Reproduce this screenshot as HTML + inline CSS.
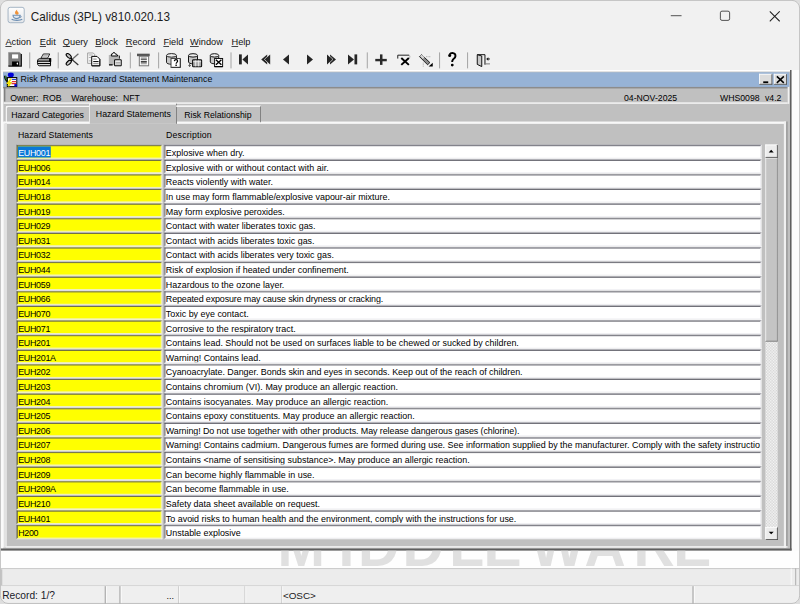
<!DOCTYPE html><html><head><meta charset="utf-8"><style>html,body{margin:0;padding:0;width:800px;height:604px;overflow:hidden;background:#dedede}#S{position:absolute;left:0;top:0;width:1040px;height:786px;transform:scale(0.7692308);transform-origin:0 0;overflow:hidden}
*{margin:0;padding:0;box-sizing:border-box}
#S{font-family:"Liberation Sans",sans-serif}
#S div,#S span,#S svg{position:absolute}
.t{white-space:nowrap;color:#000}
.menu{font-size:12.025px;top:47.19px;line-height:14.3px;color:#111}
.menu u{text-decoration:underline;text-underline-offset:1.95px;text-decoration-thickness:1.3px}
.sep{width:1.3px;height:20.8px;top:67.6px;background:#a0a0a0}
.g{background:#c0c0c0}
.ft{font-size:11.609px;line-height:15.6px;white-space:nowrap;color:#000}
.fld{height:18.98px;overflow:hidden}
</style></head><body><div id="S"><div id="W" style="left:0px;top:0px;width:1040px;height:785.2px;border-radius:10.4px;overflow:hidden;background:#f1f1f1">
<div style="left:10.4px;top:9.49px;width:21.45px;height:20.8px;border:1.69px solid #8ea3b9;border-radius:3.25px;background:linear-gradient(#fdfdfd,#e4e7ea)"></div>
<svg style="left:11.7px;top:10.4px;width:19.5px;height:19.5px" viewBox="0 0 15 15"><path d="M7.9 1.8c-1.9 1.5-2.7 3-1.7 4.6.5.8 1.7 1 2.5.4 1-.8.9-2-.1-2.8-.7-.6-.9-1.3-.7-2.2z" fill="#ef9238"/><path d="M3.8 7.6h7c0 1.9-1.4 3.3-3.5 3.3s-3.5-1.4-3.5-3.3z" fill="#dfe6ee" stroke="#6d8fb3" stroke-width="1.1"/><path d="M10.9 8.1c1.3 0 1.5 1.5 0 2" stroke="#6d8fb3" fill="none" stroke-width="0.9"/><path d="M2.4 11.6c2 1.4 8.6 1.4 10.6 0" stroke="#6d8fb3" stroke-width="1.2" fill="none"/></svg>
<div class="t" style="left:40.3px;top:12.48px;font-size:16.38px;line-height:18.2px;color:#1c1c1c;transform:scaleX(0.934);transform-origin:0 0">Calidus (3PL) v810.020.13</div>
<div style="left:872.3px;top:19.5px;width:13.65px;height:1.3px;background:#222"></div>
<div style="left:936px;top:14.3px;width:13px;height:13px;border:1.3px solid #222;border-radius:2.6px"></div>
<svg style="left:999.7px;top:14.3px;width:14.3px;height:14.3px" viewBox="0 0 11 11"><path d="M0.5 0.5L10.5 10.5M10.5 0.5L0.5 10.5" stroke="#222" stroke-width="1.1"/></svg>
<div class="t menu" style="left:7.02px"><u>A</u>ction</div>
<div class="t menu" style="left:51.74px"><u>E</u>dit</div>
<div class="t menu" style="left:81.64px"><u>Q</u>uery</div>
<div class="t menu" style="left:123.89px"><u>B</u>lock</div>
<div class="t menu" style="left:163.41px"><u>R</u>ecord</div>
<div class="t menu" style="left:212.42px"><u>F</u>ield</div>
<div class="t menu" style="left:247px"><u>W</u>indow</div>
<div class="t menu" style="left:300.95px"><u>H</u>elp</div>
<svg style="left:0px;top:58.5px;width:650px;height:35.1px" viewBox="0 45 500 27"><rect x="29.2" y="52" width="1" height="16" fill="#a4a4a4"/><rect x="57.7" y="52" width="1" height="16" fill="#a4a4a4"/><rect x="129.8" y="52" width="1" height="16" fill="#a4a4a4"/><rect x="158.1" y="52" width="1" height="16" fill="#a4a4a4"/><rect x="230.5" y="52" width="1" height="16" fill="#a4a4a4"/><rect x="366.8" y="52" width="1" height="16" fill="#a4a4a4"/><rect x="439.1" y="52" width="1" height="16" fill="#a4a4a4"/><rect x="467.1" y="52" width="1" height="16" fill="#a4a4a4"/><g transform="translate(5 49)"><path d="M3.3 3.1h11.5l2.1 2.1v11.5h-13.6z" fill="#7c7c7c"/><path d="M16.3 4.6v12.1h-13" stroke="#111" stroke-width="1.1" fill="none"/><path d="M3.3 3.1h11.5" stroke="#999" stroke-width="0.8"/><rect x="7" y="5" width="6.1" height="4.1" fill="#fff"/><rect x="7" y="12.1" width="6.9" height="4.6" fill="#000"/><ellipse cx="12.3" cy="14.2" rx="0.7" ry="1.1" fill="#fff"/></g><g transform="translate(34 49)"><path d="M9.3 4.6h6.4l-2.2 4.2h-6.6z" fill="#f2f2f2" stroke="#111" stroke-width="0.9"/><path d="M8.6 6.3h5.2M7.9 7.6h5.2" stroke="#9a9a9a" stroke-width="0.8"/><path d="M5.2 9.4h11.3v7h-11.3c-1.2 0-1.8-1.5-1.8-3.5s.6-3.5 1.8-3.5z" fill="#d8d8d8" stroke="#000" stroke-width="1"/><path d="M3.6 11.7h12.9M3.6 14.1h12.9" stroke="#000" stroke-width="1.1"/><rect x="15" y="8.8" width="2.2" height="3.6" fill="#000"/></g><g transform="translate(62 49)"><ellipse cx="6.7" cy="6.5" rx="3.1" ry="1.6" transform="rotate(42 6.7 6.5)" fill="#c4c4c4" stroke="#000" stroke-width="1.1"/><ellipse cx="6.7" cy="13.3" rx="3.1" ry="1.6" transform="rotate(-42 6.7 13.3)" fill="#c4c4c4" stroke="#000" stroke-width="1.1"/><path d="M8.8 8.6l1.6 1.4-1.6 1.6" stroke="#000" stroke-width="1.5" fill="none"/><path d="M10.2 9.9L16.4 4.3" stroke="#6a6a6a" stroke-width="1.2"/><path d="M10.2 10.4L16.3 15.6" stroke="#333" stroke-width="1.2"/></g><g transform="translate(84 49)"><path d="M3.6 3.6h5.6l1.4 1.4v9h-7z" fill="#f6f6f6" stroke="#9a9a9a" stroke-width="0.9"/><path d="M4.8 5.6h3.8M4.8 8.1h2.6M4.8 11.5h2.6" stroke="#a8a8a8" stroke-width="0.9"/><path d="M7.7 7h5.3l2.8 2.8v6.6h-8.1z" fill="#fff" stroke="#000" stroke-width="1"/><path d="M15.9 9.8v6.8h-8" stroke="#000" stroke-width="0.6" fill="none"/><path d="M9.2 9.7h3.4M9.2 14.3h5.4" stroke="#777" stroke-width="0.9"/><path d="M9.2 12.2h5.4" stroke="#000" stroke-width="1"/></g><g transform="translate(105 49)"><rect x="3.8" y="5.6" width="10.5" height="10" fill="#b6b6b6"/><path d="M4 15.4h3.6" stroke="#000" stroke-width="1.3"/><path d="M6.3 6.6h6.4l-1.2-1.9h-1.1l-1-1.6h-1l-1 1.6h-1z" fill="#fff" stroke="#000" stroke-width="1"/><path d="M14.4 6.3v3" stroke="#222" stroke-width="1"/><path d="M9.6 10.4h6.6v6h-6.6z" fill="#fff" stroke="#000" stroke-width="1"/><path d="M10.6 12.9h4.8M10.6 14.6h4.8" stroke="#8a8a8a" stroke-width="0.9"/></g><g transform="translate(133 49)"><rect x="4" y="4.3" width="12.7" height="2.5" fill="#555"/><rect x="6.3" y="6.9" width="9.3" height="9.5" fill="#fff" stroke="#777" stroke-width="1"/><rect x="7.8" y="8" width="6" height="2.1" fill="#a0a0a0"/><path d="M7.8 10.3h6" stroke="#333" stroke-width="0.8"/><path d="M7.8 12.5h6" stroke="#000" stroke-width="1.1"/><path d="M7.8 14.3h6" stroke="#8a8a8a" stroke-width="1.1"/></g><g transform="translate(163 49)"><path d="M3.5 6.3v6.6c0 1.2 2.2 2 5 2s5-.8 5-2v-6.6" fill="#c8c8c8" stroke="#222" stroke-width="1"/><ellipse cx="8.5" cy="6" rx="5" ry="1.8" fill="#eee" stroke="#222" stroke-width="1"/><rect x="8" y="9.1" width="9.3" height="8.9" fill="#fff" stroke="#444" stroke-width="1"/><path d="M17.3 9.6v8.4h-8.8" stroke="#222" stroke-width="0.7" fill="none"/><path d="M11.3 11.8c.2-1 1-1.5 1.7-1.5.9 0 1.6.6 1.6 1.4 0 1.1-1.5 1.4-1.5 2.6" stroke="#000" stroke-width="1.2" fill="none"/><rect x="12.4" y="15.2" width="1.4" height="1.4" fill="#000"/></g><g transform="translate(185 49)"><path d="M3.5 6.3v6.3c0 1 2 1.8 4.5 1.8s4.5-.8 4.5-1.8v-6.3" fill="#c8c8c8" stroke="#111" stroke-width="1"/><ellipse cx="8" cy="6" rx="4.5" ry="1.7" fill="#eee" stroke="#111" stroke-width="1"/><path d="M4.6 14.3v2.8M3.5 15.7l1.1 1.4 1.1-1.4" stroke="#333" stroke-width="0.8" fill="none"/><rect x="7.6" y="10.4" width="9" height="7" rx="0.8" fill="#a8a8a8" stroke="#111" stroke-width="1.1"/><path d="M10.6 11v6M13.6 11v6M8.1 12.3h8" stroke="#f4f4f4" stroke-width="0.8"/></g><g transform="translate(206 49)"><path d="M4.3 6.3v6.3c0 1 1.9 1.8 4.2 1.8s4.2-.8 4.2-1.8v-6.3" fill="#c8c8c8" stroke="#111" stroke-width="1"/><ellipse cx="8.5" cy="6" rx="4.2" ry="1.7" fill="#eee" stroke="#111" stroke-width="1"/><rect x="8.6" y="9.1" width="8" height="8.1" fill="#fff" stroke="#111" stroke-width="1"/><path d="M8.6 17.2h8" stroke="#000" stroke-width="1.2"/><path d="M9.9 10.4l5.5 5M15.4 10.4l-5.5 5" stroke="#000" stroke-width="1.4"/></g><g fill="#262626"><rect x="239" y="54" width="2.8" height="10"/><path d="M248 54v10l-5.6-5z"/><path d="M267.2 54v10l-6-5z"/><path d="M270.2 54v10l-5.6-5z"/><path d="M289 54v10l-6-5z"/><path d="M307 54v10l6-5z"/><path d="M327 54v10l5.6-5z"/><path d="M330 54v10l6-5z"/><path d="M348 54v10l6-5z"/><rect x="354.5" y="54" width="2.7" height="10"/></g><path d="M264.4 59l3.2-3.1M264.4 59l3.2 3.1" stroke="#f0f0f0" stroke-width="0.7"/><path d="M333 59l-3.2-3.1M333 59l-3.2 3.1" stroke="#f0f0f0" stroke-width="0.7"/><rect x="375.3" y="58.5" width="11.5" height="2.4" fill="#2a2a2a"/><rect x="380" y="54" width="2.5" height="10.5" fill="#2a2a2a"/><path d="M397.8 58.2v-3.4h11.4" stroke="#222" stroke-width="1" fill="none"/><path d="M409.2 54.8c.8.3 1 1.6 .2 3" stroke="#aaa" stroke-width="1" fill="none"/><path d="M401.3 57.6l7.6 6.9M408.9 57.6l-7.6 6.9" stroke="#000" stroke-width="2"/><path d="M419.5 56.2l2-2 8.4 8-2.3 2.2z" fill="#8a8a8a" stroke="#111" stroke-width="0.9"/><path d="M420 55.6l1.6-1.5 3 2.8-1.8 1.6z" fill="#d6d6d6"/><path d="M423.3 62.2v4.3M426 56.3h5" stroke="#999" stroke-width="0.7" stroke-dasharray="1 0.6"/><path d="M432.8 62.3v3.8h-4.2z" fill="#000"/><circle cx="449.7" cy="55.1" r="1.5" fill="#000"/><path d="M449.4 54.3c1-1.5 2.5-1.8 3.8-1.6 1.6.3 2.4 1.6 2.3 3-.1 1.6-1.4 2.4-2.4 3.4-.6.6-.9 1.5-.9 2.6" stroke="#000" stroke-width="1.9" fill="none"/><circle cx="452.3" cy="64.7" r="1.4" fill="#000"/><path d="M477.3 54.3h7.7v10" stroke="#111" stroke-width="1" fill="none"/><path d="M477.3 54.3l4.5 1.3v10.6l-4.5-2.2z" fill="#c8c8c8" stroke="#111" stroke-width="1"/><path d="M485 63.5h5" stroke="#777" stroke-width="1"/><path d="M486.2 58.6l2.2-1.8v3.6z" fill="#111"/><path d="M488 58.6h2" stroke="#111" stroke-width="0.9"/></svg>
<div style="left:3.9px;top:91px;width:1023.1px;height:2.6px;background:#ffffff"></div>
<div style="left:1.3px;top:91.39px;width:2.6px;height:624px;background:#fafafa"></div>
<div class="g" style="left:3.9px;top:93.21px;width:1023.1px;height:620.1px"></div>
<div style="left:3.9px;top:93.6px;width:1021.8px;height:19.24px;background:#97b3d6"></div>
<div style="left:1028.95px;top:91.39px;width:11.7px;height:625.3px;background:#fcfcfc"></div>
<div style="left:1027px;top:91px;width:2.08px;height:625.3px;background:#5f5f5f"></div>
<div style="left:1.3px;top:713.44px;width:1027.78px;height:2.47px;background:#5f5f5f"></div>
<svg style="left:5.2px;top:93.6px;width:18.2px;height:19.5px" viewBox="0 0 14 15"><path d="M1.3 3.5c0 2 1 4.5 2.5 5.5" stroke="#000" stroke-width="2.2" fill="none"/><path d="M1.6 3.8c0 2 .8 4 2.2 5" stroke="#3aa040" stroke-width="1" fill="none"/><ellipse cx="7" cy="2.6" rx="3" ry="2.3" fill="#0000d8"/><rect x="3.5" y="5.3" width="9.5" height="9" fill="#fff" stroke="#000" stroke-width="1.1"/><path d="M8 7.2h4.3" stroke="#2040e0" stroke-width="1.2"/><path d="M8 9.4h4.3M7.6 11.4h4.6" stroke="#e03030" stroke-width="1.3"/><path d="M7.2 6.5l-3 4.2h2.4l-2.2 3.3" stroke="#f0e000" stroke-width="1.9" fill="none"/><rect x="10.5" y="11.8" width="2.5" height="2.5" fill="#0000d8"/></svg>
<div class="t" style="left:26.78px;top:96.07px;font-size:11.505px;line-height:15.6px;color:#0a0a0a">Risk Phrase and Hazard Statement Maintenance</div>
<div style="left:986.7px;top:95.81px;width:16.9px;height:14.3px;background:#dcdcdc;border-top:1.3px solid #fff;border-left:1.3px solid #fff;border-right:1.3px solid #404040;border-bottom:1.3px solid #404040"></div>
<svg style="left:986.7px;top:95.81px;width:16.9px;height:14.3px" viewBox="0 0 13 11"><rect x="4" y="7.5" width="5" height="1.8" fill="#000"/></svg>
<div style="left:1005.94px;top:95.81px;width:16.9px;height:14.3px;background:#dcdcdc;border-top:1.3px solid #fff;border-left:1.3px solid #fff;border-right:1.3px solid #404040;border-bottom:1.3px solid #404040"></div>
<svg style="left:1005.94px;top:95.81px;width:16.9px;height:14.3px" viewBox="0 0 13 11"><path d="M3 2.5l7 6.5M10 2.5l-7 6.5" stroke="#000" stroke-width="1.5"/></svg>
<div style="left:3.9px;top:112.84px;width:1020.5px;height:2.21px;background:#8c8c8c"></div>
<div style="left:5.46px;top:112.84px;width:1.3px;height:19.5px;background:#808080"></div>
<div style="left:3.9px;top:132.86px;width:1020.5px;height:2.47px;background:#f2f2f2"></div>
<div style="left:1024.27px;top:112.84px;width:2.08px;height:22.49px;background:#f2f2f2"></div>
<div class="ft" style="left:13.39px;top:121.03px;font-size:11.31px;line-height:13px">Owner:</div>
<div class="ft" style="left:55.64px;top:121.03px;font-size:11.31px;line-height:13px">ROB</div>
<div class="ft" style="left:92.69px;top:121.03px;font-size:11.31px;line-height:13px">Warehouse:</div>
<div class="ft" style="left:159.77px;top:121.03px;font-size:11.31px;line-height:13px">NFT</div>
<div class="ft" style="left:811.2px;top:121.03px;font-size:11.31px;line-height:13px">04-NOV-2025</div>
<div class="ft" style="left:936px;top:121.03px;font-size:11.31px;line-height:13px">WHS0098</div>
<div class="ft" style="left:994.5px;top:121.03px;font-size:11.31px;line-height:13px">v4.2</div>
<div style="left:3.9px;top:158.47px;width:1017.9px;height:2.08px;background:#f8f8f8"></div>
<div style="left:3.9px;top:158.47px;width:1.69px;height:553.8px;background:#f6f6f6"></div>
<div style="left:5.59px;top:160.29px;width:2.99px;height:551.2px;background:#e2e2e2"></div>
<div style="left:3.9px;top:115.05px;width:1.56px;height:43.42px;background:#d8d8d8"></div>
<div style="left:1019.46px;top:158.47px;width:2.34px;height:553.8px;background:#f0f0f0"></div>
<div style="left:1021.8px;top:158.47px;width:2.6px;height:553.8px;background:#9c9c9c"></div>
<div style="left:6.5px;top:710.32px;width:1017.9px;height:2.08px;background:#f2f2f2"></div>
<div style="left:6.5px;top:136.76px;width:110.5px;height:22.1px;border-top:2.34px solid #f8f8f8;border-left:2.47px solid #f8f8f8;border-radius:3.9px 0 0 0"></div>
<div class="ft" style="left:14.56px;top:143.26px;font-size:11.349px">Hazard Categories</div>
<div class="g" style="left:115.7px;top:133.9px;width:114.4px;height:27.3px;border-top:2.08px solid #f8f8f8;border-left:1.69px solid #f8f8f8;border-right:1.69px solid #707070"></div>
<div class="ft" style="left:124.54px;top:141.18px;font-size:11.414px">Hazard Statements</div>
<div style="left:229.19px;top:136.5px;width:109.72px;height:22.1px;border-top:2.34px solid #f8f8f8;border-right:1.69px solid #707070"></div>
<div class="ft" style="left:239.59px;top:143.26px;font-size:11.323px">Risk Relationship</div>
<div class="ft" style="left:23.4px;top:168.74px;font-size:11.375px">Hazard Statements</div>
<div class="ft" style="left:215.8px;top:168.74px;font-size:11.375px;letter-spacing:0.26px">Description</div>
<div style="left:21px;top:188px;width:190px;height:19px;border-style:solid;border-width:1px;border-color:#a8a8b0 #ffffff #ffffff #84848c"><div style="left:0px;top:0px;width:188px;height:17px;border-style:solid;border-width:1px;border-color:#4a4a54 #eeeef2 #eeeef2 #4a4a54;background:#ffff00;overflow:hidden"><span style="left:0px;top:0px;height:15px;width:43px;background:#0a78d7"></span><span class="ft" style="left:0.6px;top:0.5px;color:#fff;letter-spacing:-0.39px">EUH001</span></div></div>
<div style="left:213px;top:188px;width:777px;height:19px;border-style:solid;border-width:1px;border-color:#a8a8b0 #ffffff #ffffff #84848c"><div style="left:0px;top:0px;width:775px;height:17px;border-style:solid;border-width:1px;border-color:#4a4a54 #eeeef2 #eeeef2 #4a4a54;background:#fff;overflow:hidden"><span class="ft" style="left:0.6px;top:0.5px">Explosive when dry.</span></div></div>
<div style="left:21px;top:207px;width:190px;height:19px;border-style:solid;border-width:1px;border-color:#a8a8b0 #ffffff #ffffff #84848c"><div style="left:0px;top:0px;width:188px;height:17px;border-style:solid;border-width:1px;border-color:#4a4a54 #eeeef2 #eeeef2 #4a4a54;background:#ffff00;overflow:hidden"><span class="ft" style="left:0.6px;top:0.5px;letter-spacing:-0.39px">EUH006</span></div></div>
<div style="left:213px;top:207px;width:777px;height:19px;border-style:solid;border-width:1px;border-color:#a8a8b0 #ffffff #ffffff #84848c"><div style="left:0px;top:0px;width:775px;height:17px;border-style:solid;border-width:1px;border-color:#4a4a54 #eeeef2 #eeeef2 #4a4a54;background:#fff;overflow:hidden"><span class="ft" style="left:0.6px;top:0.5px;letter-spacing:0.04px">Explosive with or without contact with air.</span></div></div>
<div style="left:21px;top:226px;width:190px;height:19px;border-style:solid;border-width:1px;border-color:#a8a8b0 #ffffff #ffffff #84848c"><div style="left:0px;top:0px;width:188px;height:17px;border-style:solid;border-width:1px;border-color:#4a4a54 #eeeef2 #eeeef2 #4a4a54;background:#ffff00;overflow:hidden"><span class="ft" style="left:0.6px;top:0.5px;letter-spacing:-0.39px">EUH014</span></div></div>
<div style="left:213px;top:226px;width:777px;height:19px;border-style:solid;border-width:1px;border-color:#a8a8b0 #ffffff #ffffff #84848c"><div style="left:0px;top:0px;width:775px;height:17px;border-style:solid;border-width:1px;border-color:#4a4a54 #eeeef2 #eeeef2 #4a4a54;background:#fff;overflow:hidden"><span class="ft" style="left:0.6px;top:0.5px">Reacts violently with water.</span></div></div>
<div style="left:21px;top:245px;width:190px;height:19px;border-style:solid;border-width:1px;border-color:#a8a8b0 #ffffff #ffffff #84848c"><div style="left:0px;top:0px;width:188px;height:17px;border-style:solid;border-width:1px;border-color:#4a4a54 #eeeef2 #eeeef2 #4a4a54;background:#ffff00;overflow:hidden"><span class="ft" style="left:0.6px;top:0.5px;letter-spacing:-0.39px">EUH018</span></div></div>
<div style="left:213px;top:245px;width:777px;height:19px;border-style:solid;border-width:1px;border-color:#a8a8b0 #ffffff #ffffff #84848c"><div style="left:0px;top:0px;width:775px;height:17px;border-style:solid;border-width:1px;border-color:#4a4a54 #eeeef2 #eeeef2 #4a4a54;background:#fff;overflow:hidden"><span class="ft" style="left:0.6px;top:0.5px">In use may form flammable/explosive vapour-air mixture.</span></div></div>
<div style="left:21px;top:264px;width:190px;height:19px;border-style:solid;border-width:1px;border-color:#a8a8b0 #ffffff #ffffff #84848c"><div style="left:0px;top:0px;width:188px;height:17px;border-style:solid;border-width:1px;border-color:#4a4a54 #eeeef2 #eeeef2 #4a4a54;background:#ffff00;overflow:hidden"><span class="ft" style="left:0.6px;top:0.5px;letter-spacing:-0.39px">EUH019</span></div></div>
<div style="left:213px;top:264px;width:777px;height:19px;border-style:solid;border-width:1px;border-color:#a8a8b0 #ffffff #ffffff #84848c"><div style="left:0px;top:0px;width:775px;height:17px;border-style:solid;border-width:1px;border-color:#4a4a54 #eeeef2 #eeeef2 #4a4a54;background:#fff;overflow:hidden"><span class="ft" style="left:0.6px;top:0.5px;letter-spacing:-0.074px">May form explosive peroxides.</span></div></div>
<div style="left:21px;top:283px;width:190px;height:19px;border-style:solid;border-width:1px;border-color:#a8a8b0 #ffffff #ffffff #84848c"><div style="left:0px;top:0px;width:188px;height:17px;border-style:solid;border-width:1px;border-color:#4a4a54 #eeeef2 #eeeef2 #4a4a54;background:#ffff00;overflow:hidden"><span class="ft" style="left:0.6px;top:0.5px;letter-spacing:-0.39px">EUH029</span></div></div>
<div style="left:213px;top:283px;width:777px;height:19px;border-style:solid;border-width:1px;border-color:#a8a8b0 #ffffff #ffffff #84848c"><div style="left:0px;top:0px;width:775px;height:17px;border-style:solid;border-width:1px;border-color:#4a4a54 #eeeef2 #eeeef2 #4a4a54;background:#fff;overflow:hidden"><span class="ft" style="left:0.6px;top:0.5px">Contact with water liberates toxic gas.</span></div></div>
<div style="left:21px;top:302px;width:190px;height:19px;border-style:solid;border-width:1px;border-color:#a8a8b0 #ffffff #ffffff #84848c"><div style="left:0px;top:0px;width:188px;height:17px;border-style:solid;border-width:1px;border-color:#4a4a54 #eeeef2 #eeeef2 #4a4a54;background:#ffff00;overflow:hidden"><span class="ft" style="left:0.6px;top:0.5px;letter-spacing:-0.39px">EUH031</span></div></div>
<div style="left:213px;top:302px;width:777px;height:19px;border-style:solid;border-width:1px;border-color:#a8a8b0 #ffffff #ffffff #84848c"><div style="left:0px;top:0px;width:775px;height:17px;border-style:solid;border-width:1px;border-color:#4a4a54 #eeeef2 #eeeef2 #4a4a54;background:#fff;overflow:hidden"><span class="ft" style="left:0.6px;top:0.5px">Contact with acids liberates toxic gas.</span></div></div>
<div style="left:21px;top:321px;width:190px;height:19px;border-style:solid;border-width:1px;border-color:#a8a8b0 #ffffff #ffffff #84848c"><div style="left:0px;top:0px;width:188px;height:17px;border-style:solid;border-width:1px;border-color:#4a4a54 #eeeef2 #eeeef2 #4a4a54;background:#ffff00;overflow:hidden"><span class="ft" style="left:0.6px;top:0.5px;letter-spacing:-0.39px">EUH032</span></div></div>
<div style="left:213px;top:321px;width:777px;height:19px;border-style:solid;border-width:1px;border-color:#a8a8b0 #ffffff #ffffff #84848c"><div style="left:0px;top:0px;width:775px;height:17px;border-style:solid;border-width:1px;border-color:#4a4a54 #eeeef2 #eeeef2 #4a4a54;background:#fff;overflow:hidden"><span class="ft" style="left:0.6px;top:0.5px">Contact with acids liberates very toxic gas.</span></div></div>
<div style="left:21px;top:340px;width:190px;height:19px;border-style:solid;border-width:1px;border-color:#a8a8b0 #ffffff #ffffff #84848c"><div style="left:0px;top:0px;width:188px;height:17px;border-style:solid;border-width:1px;border-color:#4a4a54 #eeeef2 #eeeef2 #4a4a54;background:#ffff00;overflow:hidden"><span class="ft" style="left:0.6px;top:0.5px;letter-spacing:-0.39px">EUH044</span></div></div>
<div style="left:213px;top:340px;width:777px;height:19px;border-style:solid;border-width:1px;border-color:#a8a8b0 #ffffff #ffffff #84848c"><div style="left:0px;top:0px;width:775px;height:17px;border-style:solid;border-width:1px;border-color:#4a4a54 #eeeef2 #eeeef2 #4a4a54;background:#fff;overflow:hidden"><span class="ft" style="left:0.6px;top:0.5px">Risk of explosion if heated under confinement.</span></div></div>
<div style="left:21px;top:359px;width:190px;height:19px;border-style:solid;border-width:1px;border-color:#a8a8b0 #ffffff #ffffff #84848c"><div style="left:0px;top:0px;width:188px;height:17px;border-style:solid;border-width:1px;border-color:#4a4a54 #eeeef2 #eeeef2 #4a4a54;background:#ffff00;overflow:hidden"><span class="ft" style="left:0.6px;top:0.5px;letter-spacing:-0.39px">EUH059</span></div></div>
<div style="left:213px;top:359px;width:777px;height:19px;border-style:solid;border-width:1px;border-color:#a8a8b0 #ffffff #ffffff #84848c"><div style="left:0px;top:0px;width:775px;height:17px;border-style:solid;border-width:1px;border-color:#4a4a54 #eeeef2 #eeeef2 #4a4a54;background:#fff;overflow:hidden"><span class="ft" style="left:0.6px;top:0.5px">Hazardous to the ozone layer.</span></div></div>
<div style="left:21px;top:378px;width:190px;height:19px;border-style:solid;border-width:1px;border-color:#a8a8b0 #ffffff #ffffff #84848c"><div style="left:0px;top:0px;width:188px;height:17px;border-style:solid;border-width:1px;border-color:#4a4a54 #eeeef2 #eeeef2 #4a4a54;background:#ffff00;overflow:hidden"><span class="ft" style="left:0.6px;top:0.5px;letter-spacing:-0.39px">EUH066</span></div></div>
<div style="left:213px;top:378px;width:777px;height:19px;border-style:solid;border-width:1px;border-color:#a8a8b0 #ffffff #ffffff #84848c"><div style="left:0px;top:0px;width:775px;height:17px;border-style:solid;border-width:1px;border-color:#4a4a54 #eeeef2 #eeeef2 #4a4a54;background:#fff;overflow:hidden"><span class="ft" style="left:0.6px;top:0.5px;letter-spacing:-0.167px">Repeated exposure may cause skin dryness or cracking.</span></div></div>
<div style="left:21px;top:397px;width:190px;height:19px;border-style:solid;border-width:1px;border-color:#a8a8b0 #ffffff #ffffff #84848c"><div style="left:0px;top:0px;width:188px;height:17px;border-style:solid;border-width:1px;border-color:#4a4a54 #eeeef2 #eeeef2 #4a4a54;background:#ffff00;overflow:hidden"><span class="ft" style="left:0.6px;top:0.5px;letter-spacing:-0.39px">EUH070</span></div></div>
<div style="left:213px;top:397px;width:777px;height:19px;border-style:solid;border-width:1px;border-color:#a8a8b0 #ffffff #ffffff #84848c"><div style="left:0px;top:0px;width:775px;height:17px;border-style:solid;border-width:1px;border-color:#4a4a54 #eeeef2 #eeeef2 #4a4a54;background:#fff;overflow:hidden"><span class="ft" style="left:0.6px;top:0.5px">Toxic by eye contact.</span></div></div>
<div style="left:21px;top:416px;width:190px;height:19px;border-style:solid;border-width:1px;border-color:#a8a8b0 #ffffff #ffffff #84848c"><div style="left:0px;top:0px;width:188px;height:17px;border-style:solid;border-width:1px;border-color:#4a4a54 #eeeef2 #eeeef2 #4a4a54;background:#ffff00;overflow:hidden"><span class="ft" style="left:0.6px;top:0.5px;letter-spacing:-0.39px">EUH071</span></div></div>
<div style="left:213px;top:416px;width:777px;height:19px;border-style:solid;border-width:1px;border-color:#a8a8b0 #ffffff #ffffff #84848c"><div style="left:0px;top:0px;width:775px;height:17px;border-style:solid;border-width:1px;border-color:#4a4a54 #eeeef2 #eeeef2 #4a4a54;background:#fff;overflow:hidden"><span class="ft" style="left:0.6px;top:0.5px">Corrosive to the respiratory tract.</span></div></div>
<div style="left:21px;top:435px;width:190px;height:19px;border-style:solid;border-width:1px;border-color:#a8a8b0 #ffffff #ffffff #84848c"><div style="left:0px;top:0px;width:188px;height:17px;border-style:solid;border-width:1px;border-color:#4a4a54 #eeeef2 #eeeef2 #4a4a54;background:#ffff00;overflow:hidden"><span class="ft" style="left:0.6px;top:0.5px;letter-spacing:-0.39px">EUH201</span></div></div>
<div style="left:213px;top:435px;width:777px;height:19px;border-style:solid;border-width:1px;border-color:#a8a8b0 #ffffff #ffffff #84848c"><div style="left:0px;top:0px;width:775px;height:17px;border-style:solid;border-width:1px;border-color:#4a4a54 #eeeef2 #eeeef2 #4a4a54;background:#fff;overflow:hidden"><span class="ft" style="left:0.6px;top:0.5px">Contains lead. Should not be used on surfaces liable to be chewed or sucked by children.</span></div></div>
<div style="left:21px;top:454px;width:190px;height:19px;border-style:solid;border-width:1px;border-color:#a8a8b0 #ffffff #ffffff #84848c"><div style="left:0px;top:0px;width:188px;height:17px;border-style:solid;border-width:1px;border-color:#4a4a54 #eeeef2 #eeeef2 #4a4a54;background:#ffff00;overflow:hidden"><span class="ft" style="left:0.6px;top:0.5px;letter-spacing:-0.39px">EUH201A</span></div></div>
<div style="left:213px;top:454px;width:777px;height:19px;border-style:solid;border-width:1px;border-color:#a8a8b0 #ffffff #ffffff #84848c"><div style="left:0px;top:0px;width:775px;height:17px;border-style:solid;border-width:1px;border-color:#4a4a54 #eeeef2 #eeeef2 #4a4a54;background:#fff;overflow:hidden"><span class="ft" style="left:0.6px;top:0.5px">Warning! Contains lead.</span></div></div>
<div style="left:21px;top:473px;width:190px;height:19px;border-style:solid;border-width:1px;border-color:#a8a8b0 #ffffff #ffffff #84848c"><div style="left:0px;top:0px;width:188px;height:17px;border-style:solid;border-width:1px;border-color:#4a4a54 #eeeef2 #eeeef2 #4a4a54;background:#ffff00;overflow:hidden"><span class="ft" style="left:0.6px;top:0.5px;letter-spacing:-0.39px">EUH202</span></div></div>
<div style="left:213px;top:473px;width:777px;height:19px;border-style:solid;border-width:1px;border-color:#a8a8b0 #ffffff #ffffff #84848c"><div style="left:0px;top:0px;width:775px;height:17px;border-style:solid;border-width:1px;border-color:#4a4a54 #eeeef2 #eeeef2 #4a4a54;background:#fff;overflow:hidden"><span class="ft" style="left:0.6px;top:0.5px;letter-spacing:-0.04px">Cyanoacrylate. Danger. Bonds skin and eyes in seconds. Keep out of the reach of children.</span></div></div>
<div style="left:21px;top:492px;width:190px;height:19px;border-style:solid;border-width:1px;border-color:#a8a8b0 #ffffff #ffffff #84848c"><div style="left:0px;top:0px;width:188px;height:17px;border-style:solid;border-width:1px;border-color:#4a4a54 #eeeef2 #eeeef2 #4a4a54;background:#ffff00;overflow:hidden"><span class="ft" style="left:0.6px;top:0.5px;letter-spacing:-0.39px">EUH203</span></div></div>
<div style="left:213px;top:492px;width:777px;height:19px;border-style:solid;border-width:1px;border-color:#a8a8b0 #ffffff #ffffff #84848c"><div style="left:0px;top:0px;width:775px;height:17px;border-style:solid;border-width:1px;border-color:#4a4a54 #eeeef2 #eeeef2 #4a4a54;background:#fff;overflow:hidden"><span class="ft" style="left:0.6px;top:0.5px;letter-spacing:0.051px">Contains chromium (VI). May produce an allergic reaction.</span></div></div>
<div style="left:21px;top:511px;width:190px;height:19px;border-style:solid;border-width:1px;border-color:#a8a8b0 #ffffff #ffffff #84848c"><div style="left:0px;top:0px;width:188px;height:17px;border-style:solid;border-width:1px;border-color:#4a4a54 #eeeef2 #eeeef2 #4a4a54;background:#ffff00;overflow:hidden"><span class="ft" style="left:0.6px;top:0.5px;letter-spacing:-0.39px">EUH204</span></div></div>
<div style="left:213px;top:511px;width:777px;height:19px;border-style:solid;border-width:1px;border-color:#a8a8b0 #ffffff #ffffff #84848c"><div style="left:0px;top:0px;width:775px;height:17px;border-style:solid;border-width:1px;border-color:#4a4a54 #eeeef2 #eeeef2 #4a4a54;background:#fff;overflow:hidden"><span class="ft" style="left:0.6px;top:0.5px;letter-spacing:0.031px">Contains isocyanates. May produce an allergic reaction.</span></div></div>
<div style="left:21px;top:530px;width:190px;height:19px;border-style:solid;border-width:1px;border-color:#a8a8b0 #ffffff #ffffff #84848c"><div style="left:0px;top:0px;width:188px;height:17px;border-style:solid;border-width:1px;border-color:#4a4a54 #eeeef2 #eeeef2 #4a4a54;background:#ffff00;overflow:hidden"><span class="ft" style="left:0.6px;top:0.5px;letter-spacing:-0.39px">EUH205</span></div></div>
<div style="left:213px;top:530px;width:777px;height:19px;border-style:solid;border-width:1px;border-color:#a8a8b0 #ffffff #ffffff #84848c"><div style="left:0px;top:0px;width:775px;height:17px;border-style:solid;border-width:1px;border-color:#4a4a54 #eeeef2 #eeeef2 #4a4a54;background:#fff;overflow:hidden"><span class="ft" style="left:0.6px;top:0.5px;letter-spacing:0.023px">Contains epoxy constituents. May produce an allergic reaction.</span></div></div>
<div style="left:21px;top:549px;width:190px;height:19px;border-style:solid;border-width:1px;border-color:#a8a8b0 #ffffff #ffffff #84848c"><div style="left:0px;top:0px;width:188px;height:17px;border-style:solid;border-width:1px;border-color:#4a4a54 #eeeef2 #eeeef2 #4a4a54;background:#ffff00;overflow:hidden"><span class="ft" style="left:0.6px;top:0.5px;letter-spacing:-0.39px">EUH206</span></div></div>
<div style="left:213px;top:549px;width:777px;height:19px;border-style:solid;border-width:1px;border-color:#a8a8b0 #ffffff #ffffff #84848c"><div style="left:0px;top:0px;width:775px;height:17px;border-style:solid;border-width:1px;border-color:#4a4a54 #eeeef2 #eeeef2 #4a4a54;background:#fff;overflow:hidden"><span class="ft" style="left:0.6px;top:0.5px;letter-spacing:-0.103px">Warning! Do not use together with other products. May release dangerous gases (chlorine).</span></div></div>
<div style="left:21px;top:568px;width:190px;height:19px;border-style:solid;border-width:1px;border-color:#a8a8b0 #ffffff #ffffff #84848c"><div style="left:0px;top:0px;width:188px;height:17px;border-style:solid;border-width:1px;border-color:#4a4a54 #eeeef2 #eeeef2 #4a4a54;background:#ffff00;overflow:hidden"><span class="ft" style="left:0.6px;top:0.5px;letter-spacing:-0.39px">EUH207</span></div></div>
<div style="left:213px;top:568px;width:777px;height:19px;border-style:solid;border-width:1px;border-color:#a8a8b0 #ffffff #ffffff #84848c"><div style="left:0px;top:0px;width:775px;height:17px;border-style:solid;border-width:1px;border-color:#4a4a54 #eeeef2 #eeeef2 #4a4a54;background:#fff;overflow:hidden"><span class="ft" style="left:0.6px;top:0.5px">Warning! Contains cadmium. Dangerous fumes are formed during use. See information supplied by the manufacturer. Comply with the safety instructions.</span></div></div>
<div style="left:21px;top:587px;width:190px;height:19px;border-style:solid;border-width:1px;border-color:#a8a8b0 #ffffff #ffffff #84848c"><div style="left:0px;top:0px;width:188px;height:17px;border-style:solid;border-width:1px;border-color:#4a4a54 #eeeef2 #eeeef2 #4a4a54;background:#ffff00;overflow:hidden"><span class="ft" style="left:0.6px;top:0.5px;letter-spacing:-0.39px">EUH208</span></div></div>
<div style="left:213px;top:587px;width:777px;height:19px;border-style:solid;border-width:1px;border-color:#a8a8b0 #ffffff #ffffff #84848c"><div style="left:0px;top:0px;width:775px;height:17px;border-style:solid;border-width:1px;border-color:#4a4a54 #eeeef2 #eeeef2 #4a4a54;background:#fff;overflow:hidden"><span class="ft" style="left:0.6px;top:0.5px">Contains &lt;name of sensitising substance&gt;. May produce an allergic reaction.</span></div></div>
<div style="left:21px;top:606px;width:190px;height:19px;border-style:solid;border-width:1px;border-color:#a8a8b0 #ffffff #ffffff #84848c"><div style="left:0px;top:0px;width:188px;height:17px;border-style:solid;border-width:1px;border-color:#4a4a54 #eeeef2 #eeeef2 #4a4a54;background:#ffff00;overflow:hidden"><span class="ft" style="left:0.6px;top:0.5px;letter-spacing:-0.39px">EUH209</span></div></div>
<div style="left:213px;top:606px;width:777px;height:19px;border-style:solid;border-width:1px;border-color:#a8a8b0 #ffffff #ffffff #84848c"><div style="left:0px;top:0px;width:775px;height:17px;border-style:solid;border-width:1px;border-color:#4a4a54 #eeeef2 #eeeef2 #4a4a54;background:#fff;overflow:hidden"><span class="ft" style="left:0.6px;top:0.5px">Can become highly flammable in use.</span></div></div>
<div style="left:21px;top:625px;width:190px;height:19px;border-style:solid;border-width:1px;border-color:#a8a8b0 #ffffff #ffffff #84848c"><div style="left:0px;top:0px;width:188px;height:17px;border-style:solid;border-width:1px;border-color:#4a4a54 #eeeef2 #eeeef2 #4a4a54;background:#ffff00;overflow:hidden"><span class="ft" style="left:0.6px;top:0.5px;letter-spacing:-0.39px">EUH209A</span></div></div>
<div style="left:213px;top:625px;width:777px;height:19px;border-style:solid;border-width:1px;border-color:#a8a8b0 #ffffff #ffffff #84848c"><div style="left:0px;top:0px;width:775px;height:17px;border-style:solid;border-width:1px;border-color:#4a4a54 #eeeef2 #eeeef2 #4a4a54;background:#fff;overflow:hidden"><span class="ft" style="left:0.6px;top:0.5px">Can become flammable in use.</span></div></div>
<div style="left:21px;top:644px;width:190px;height:19px;border-style:solid;border-width:1px;border-color:#a8a8b0 #ffffff #ffffff #84848c"><div style="left:0px;top:0px;width:188px;height:17px;border-style:solid;border-width:1px;border-color:#4a4a54 #eeeef2 #eeeef2 #4a4a54;background:#ffff00;overflow:hidden"><span class="ft" style="left:0.6px;top:0.5px;letter-spacing:-0.39px">EUH210</span></div></div>
<div style="left:213px;top:644px;width:777px;height:19px;border-style:solid;border-width:1px;border-color:#a8a8b0 #ffffff #ffffff #84848c"><div style="left:0px;top:0px;width:775px;height:17px;border-style:solid;border-width:1px;border-color:#4a4a54 #eeeef2 #eeeef2 #4a4a54;background:#fff;overflow:hidden"><span class="ft" style="left:0.6px;top:0.5px">Safety data sheet available on request.</span></div></div>
<div style="left:21px;top:663px;width:190px;height:19px;border-style:solid;border-width:1px;border-color:#a8a8b0 #ffffff #ffffff #84848c"><div style="left:0px;top:0px;width:188px;height:17px;border-style:solid;border-width:1px;border-color:#4a4a54 #eeeef2 #eeeef2 #4a4a54;background:#ffff00;overflow:hidden"><span class="ft" style="left:0.6px;top:0.5px;letter-spacing:-0.39px">EUH401</span></div></div>
<div style="left:213px;top:663px;width:777px;height:19px;border-style:solid;border-width:1px;border-color:#a8a8b0 #ffffff #ffffff #84848c"><div style="left:0px;top:0px;width:775px;height:17px;border-style:solid;border-width:1px;border-color:#4a4a54 #eeeef2 #eeeef2 #4a4a54;background:#fff;overflow:hidden"><span class="ft" style="left:0.6px;top:0.5px">To avoid risks to human health and the environment, comply with the instructions for use.</span></div></div>
<div style="left:21px;top:682px;width:190px;height:19px;border-style:solid;border-width:1px;border-color:#a8a8b0 #ffffff #ffffff #84848c"><div style="left:0px;top:0px;width:188px;height:17px;border-style:solid;border-width:1px;border-color:#4a4a54 #eeeef2 #eeeef2 #4a4a54;background:#ffff00;overflow:hidden"><span class="ft" style="left:0.6px;top:0.5px;letter-spacing:-0.39px">H200</span></div></div>
<div style="left:213px;top:682px;width:777px;height:19px;border-style:solid;border-width:1px;border-color:#a8a8b0 #ffffff #ffffff #84848c"><div style="left:0px;top:0px;width:775px;height:17px;border-style:solid;border-width:1px;border-color:#4a4a54 #eeeef2 #eeeef2 #4a4a54;background:#fff;overflow:hidden"><span class="ft" style="left:0.6px;top:0.5px">Unstable explosive</span></div></div>
<div style="left:995.41px;top:187.85px;width:15.99px;height:513.89px;background:repeating-conic-gradient(#d0d0d0 0 25%,#fafafa 0 50%) 0 0/2px 2px"></div>
<div style="left:995.41px;top:204.62px;width:15.99px;height:239.33px;background:#c4c4c4;border-left:1.3px solid #f4f4f4;border-top:1.3px solid #f4f4f4;border-right:1.3px solid #808080;border-bottom:1.56px solid #6c6c6c"></div>
<div style="left:995.41px;top:187.85px;width:15.99px;height:16.77px;background:#ececec;border-right:1.56px solid #3a3a3a;border-bottom:1.56px solid #3a3a3a;border-top:1.3px solid #fff;border-left:1.3px solid #fff"></div>
<svg style="left:995.41px;top:187.85px;width:15.6px;height:16.9px" viewBox="0 0 12 13"><path d="M3.3 7.8h5l-2.5-2.6z" fill="#000"/></svg>
<div style="left:995.41px;top:684.58px;width:15.99px;height:17.16px;background:#ececec;border-right:1.56px solid #3a3a3a;border-bottom:1.56px solid #3a3a3a;border-top:1.3px solid #fff;border-left:1.3px solid #fff"></div>
<svg style="left:995.41px;top:684.58px;width:15.6px;height:16.9px" viewBox="0 0 12 13"><path d="M3.3 4.8h5l-2.5 2.6z" fill="#000"/></svg>
<div style="left:1.3px;top:715.91px;width:1037.4px;height:22.75px;background:#fefefe"></div>
<svg style="left:0px;top:715.91px;width:1040px;height:22.75px" viewBox="0 550.7 800 17.5"><g font-family="Liberation Sans" font-weight="bold" font-size="57" fill="#e0e0e0"><text x="277.44" y="565.8">M</text><text x="338.44" y="565.8">I</text><text x="357.94" y="565.8">D</text><text x="402.44" y="565.8">D</text><text x="449.14" y="565.8">L</text><text x="483.44" y="565.8">E</text><text x="530.70" y="565.8">W</text><text x="584.61" y="565.8">A</text><text x="633.44" y="565.8">R</text><text x="673.14" y="565.8">E</text></g></svg>
<div style="left:1.3px;top:738.66px;width:1037.4px;height:1.3px;background:#a8a8a8"></div>
<div style="left:1.3px;top:739.96px;width:1037.4px;height:20.8px;background:#ececec"></div>
<div style="left:1.3px;top:739.96px;width:1.56px;height:20.8px;background:#c4c4c4"></div>
<div style="left:1027.65px;top:738.66px;width:1.3px;height:22.1px;background:#ffffff"></div>
<div style="left:1033.76px;top:738.66px;width:1.43px;height:22.1px;background:#9a9a9a"></div>
<div style="left:1.3px;top:760.76px;width:1037.4px;height:1.69px;background:#c8c8c8"></div>
<div style="left:1.3px;top:762.45px;width:1037.4px;height:23.4px;background:#efefef"></div>
<div style="left:136.24px;top:762.45px;width:1.3px;height:23.4px;background:#b4b4b4"></div>
<div style="left:137.54px;top:762.45px;width:1.3px;height:23.4px;background:#ffffff"></div>
<div style="left:155.35px;top:762.45px;width:1.3px;height:23.4px;background:#b4b4b4"></div>
<div style="left:156.65px;top:762.45px;width:1.3px;height:23.4px;background:#ffffff"></div>
<div style="left:231.79px;top:762.45px;width:1.3px;height:23.4px;background:#b4b4b4"></div>
<div style="left:233.09px;top:762.45px;width:1.3px;height:23.4px;background:#ffffff"></div>
<div style="left:317.85px;top:762.45px;width:1.3px;height:23.4px;background:#b4b4b4"></div>
<div style="left:319.15px;top:762.45px;width:1.3px;height:23.4px;background:#ffffff"></div>
<div style="left:365.56px;top:762.45px;width:1.3px;height:23.4px;background:#b4b4b4"></div>
<div style="left:366.86px;top:762.45px;width:1.3px;height:23.4px;background:#ffffff"></div>
<div style="left:900.38px;top:762.45px;width:1.3px;height:23.4px;background:#b4b4b4"></div>
<div style="left:901.68px;top:762.45px;width:1.3px;height:23.4px;background:#ffffff"></div>
<div class="t" style="left:2.86px;top:767.78px;font-size:13.26px;line-height:14.3px;color:#1a1a2a">Record: 1/?</div>
<div class="t" style="left:216.45px;top:768.04px;font-size:11.7px;line-height:14.3px">...</div>
<div class="t" style="left:367.77px;top:768.04px;font-size:12.87px;color:#1a1a1a;line-height:14.3px">&lt;OSC&gt;</div>
</div>
<div style="left:0px;top:0px;width:1040px;height:785.2px;border-radius:10.4px;border:1.3px solid #b0b0b0"></div></div></body></html>
